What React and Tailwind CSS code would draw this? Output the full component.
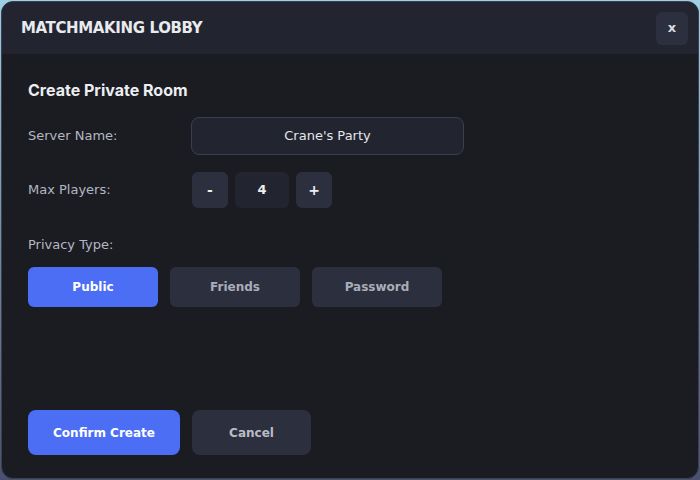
import { useState } from 'react';

export default function App() {
  const [name] = useState("Crane's Party");
  const [players, setPlayers] = useState(4);
  const [privacy, setPrivacy] = useState('Public');

  return (
    <div
      className="w-[700px] h-[480px] p-px bg-gradient-to-b from-[#9fcfe2] to-[#4a5070]"
      style={{ fontFamily: '"DejaVu Sans", "Noto Sans", sans-serif' }}
    >
      <div className="h-full flex flex-col rounded-xl border border-[#3b4052] bg-[#1b1c21] overflow-hidden">
        {/* Header */}
        <div className="h-[52px] shrink-0 flex items-center justify-between pl-[19px] pr-2.5 bg-[#222530]">
          <h1 className="text-[15px] font-bold text-[#e9eaee] tracking-tight">MATCHMAKING LOBBY</h1>
          <button className="w-8 h-[33px] rounded-md bg-[#2c303e] text-[#d9dbe2] text-[13px] font-bold flex items-center justify-center">
            x
          </button>
        </div>

        {/* Body */}
        <div className="flex-1 flex flex-col px-[26px] pt-[26px] pb-[23px]">
          <h2 className="text-base font-bold text-[#eceef2] leading-[20px] font-['Inter',sans-serif]">Create Private Room</h2>

          <div className="mt-[17px] flex items-center">
            <span className="w-[163px] text-[13px] text-[#b4b7c2]">Server Name:</span>
            <div className="w-[273px] h-[38px] rounded-lg border border-[#3a3e4e] bg-[#222530] flex items-center justify-center text-[13px] text-[#e4e6ea]">
              {name}
            </div>
          </div>

          <div className="mt-[17px] flex items-center">
            <span className="w-[164px] text-[13px] text-[#b4b7c2]">Max Players:</span>
            <div className="flex gap-[7px]">
              <button
                onClick={() => setPlayers(Math.max(2, players - 1))}
                className="w-9 h-9 rounded-md bg-[#2c303e] text-[#eceef2] text-sm font-bold"
              >
                -
              </button>
              <div className="w-[54px] h-9 rounded-md bg-[#222530] flex items-center justify-center text-[#eceef2] text-[13px] font-bold">
                {players}
              </div>
              <button
                onClick={() => setPlayers(players + 1)}
                className="w-9 h-9 rounded-md bg-[#2c303e] text-[#eceef2] text-sm font-bold"
              >
                +
              </button>
            </div>
          </div>

          <span className="mt-[28px] text-[13px] text-[#b4b7c2] leading-[18px]">Privacy Type:</span>

          <div className="mt-[13px] flex gap-3">
            {['Public', 'Friends', 'Password'].map((p) => (
              <button
                key={p}
                onClick={() => setPrivacy(p)}
                className={
                  privacy === p
                    ? 'w-[130px] h-10 rounded-md bg-[#4c6ef5] text-white text-[12px] font-bold'
                    : 'w-[130px] h-10 rounded-md bg-[#2c303e] text-[#a9adb9] text-[12px] font-bold'
                }
              >
                {p}
              </button>
            ))}
          </div>

          {/* Footer buttons */}
          <div className="mt-auto flex gap-3">
            <button className="w-[152px] h-[45px] rounded-lg bg-[#4c6ef5] text-white text-[12px] font-bold">
              Confirm Create
            </button>
            <button className="w-[119px] h-[45px] rounded-lg bg-[#2c303e] text-[#b9bcc6] text-[12px] font-bold">
              Cancel
            </button>
          </div>
        </div>
      </div>
    </div>
  );
}
